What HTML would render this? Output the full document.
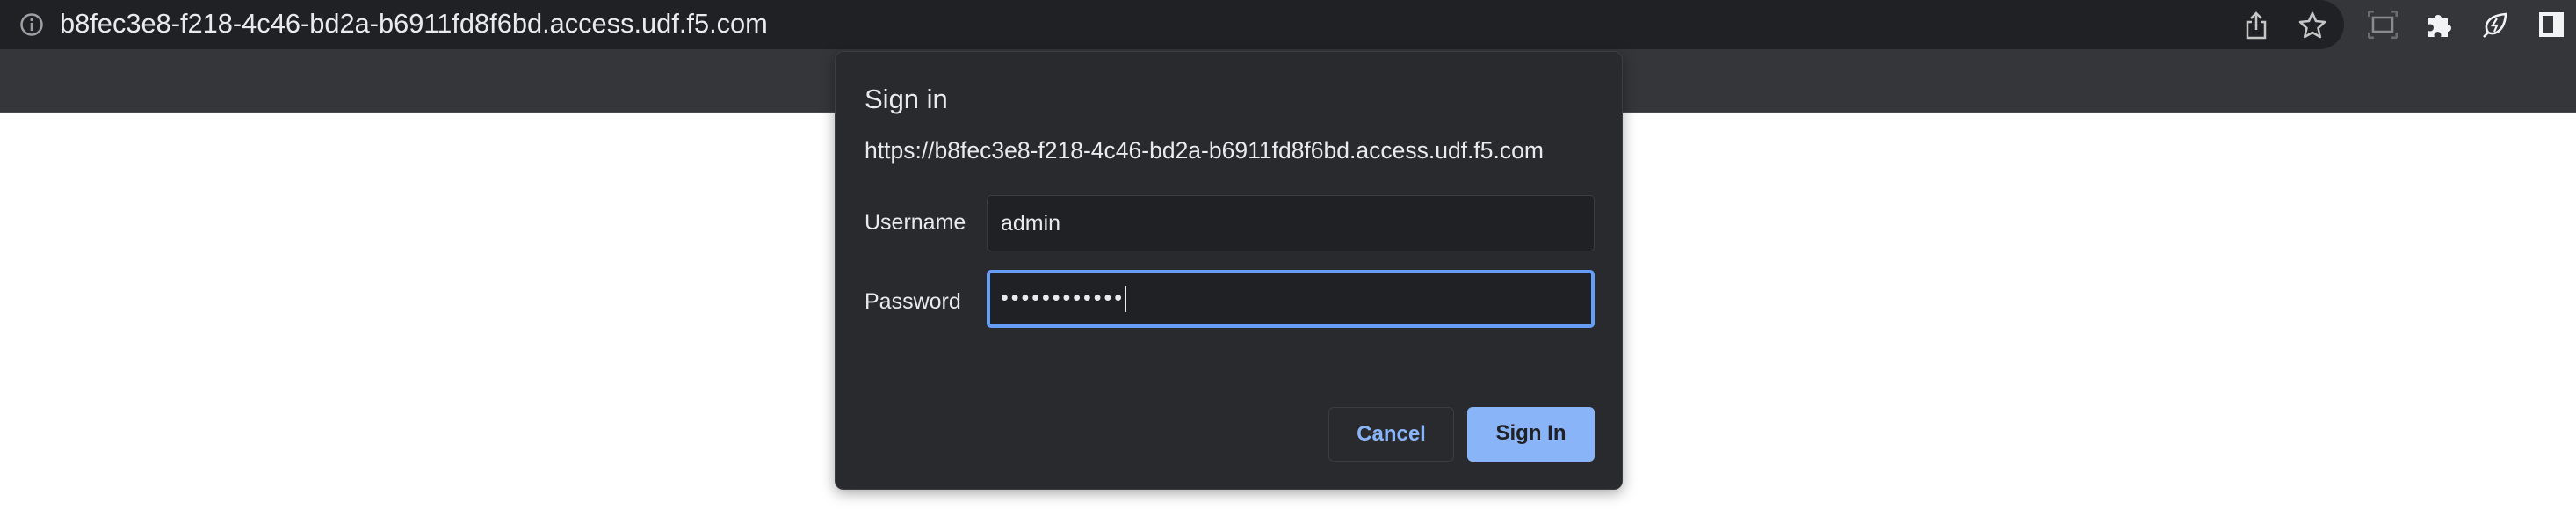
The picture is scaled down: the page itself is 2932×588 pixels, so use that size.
<!DOCTYPE html>
<html><head><meta charset="utf-8"><style>
*{margin:0;padding:0;box-sizing:border-box}
body{width:2932px;height:588px;background:#fff;position:relative;overflow:hidden;font-family:"Liberation Sans",sans-serif}
.bar{position:absolute;left:0;top:0;width:2932px;height:129px;background:#35363a;border-bottom:2px solid #4a4b4f}
.pill{position:absolute;left:0;top:0;width:2668px;height:56px;background:#202124;border-radius:0 28px 28px 0}
.url{position:absolute;left:68px;top:9px;font-size:30.8px;color:#e8eaed}
.ic{position:absolute}
.dlg{position:absolute;left:950px;top:58px;width:897px;height:499px;background:#292a2d;border:1px solid #3c3d40;border-radius:10px;box-shadow:0 4px 16px rgba(0,0,0,.35);color:#e8eaed}
.t{position:absolute;left:33px;top:36px;font-size:31px}
.u{position:absolute;left:33px;top:97px;font-size:26.5px}
.lb{position:absolute;left:33px;font-size:25px}
.f{position:absolute;left:172px;width:692px;background:#202124;border:1px solid #3c3d40;border-radius:5px;font-size:25px;padding-left:15px}
.btn{position:absolute;top:404px;height:62px;border-radius:6px;font-size:24px;font-weight:bold;text-align:center;line-height:60px}
</style></head><body>
<div class="bar">
<div class="pill"></div>
<svg class="ic" style="left:22px;top:14px" width="28" height="28" viewBox="0 0 28 28"><circle cx="14" cy="14" r="11.5" fill="none" stroke="#9aa0a6" stroke-width="2.5"/><rect x="12.7" y="12" width="2.6" height="9" fill="#9aa0a6"/><circle cx="14" cy="8.5" r="1.6" fill="#9aa0a6"/></svg>
<div class="url">b8fec3e8-f218-4c46-bd2a-b6911fd8f6bd.access.udf.f5.com</div>
<svg class="ic" style="left:2553px;top:12px" width="30" height="34" viewBox="0 0 30 34"><path d="M10 13H5v18h20V13h-5M15 22V3M9 9l6-6 6 6" fill="none" stroke="#c4c7c5" stroke-width="2.5"/></svg>
<svg class="ic" style="left:2615px;top:12px" width="34" height="32" viewBox="0 0 34 32"><path d="M17 3l4 9 10 1-7.5 7 2.3 10L17 25l-8.8 5 2.3-10L3 13l10-1z" fill="none" stroke="#c4c7c5" stroke-width="2.6" stroke-linejoin="round"/></svg>
<svg class="ic" style="left:2695px;top:12px" width="34" height="32" viewBox="0 0 34 32"><path d="M1 1h6M1 1v6M33 1h-6M33 1v6M1 31h6M1 31v-6M33 31h-6M33 31v-6" stroke="#6b6c6f" stroke-width="3"/><rect x="6" y="8" width="22" height="16" fill="none" stroke="#8a8b8e" stroke-width="2.5"/></svg>
<svg class="ic" style="left:2761px;top:13px" width="32" height="30" viewBox="0 0 32 30"><path d="M3 8h7a4 4 0 1 1 8 0h7v7a4 4 0 1 1 0 8v6h-8a4 4 0 1 0-7 0H3v-7a4 4 0 1 0 0-7z" fill="#f1f3f4"/></svg>
<svg class="ic" style="left:2824px;top:12px" width="32" height="32" viewBox="0 0 32 32"><path d="M3 30l5-5M8 25C3 18 6 6 28 4 27 22 16 29 8 25z" fill="none" stroke="#f1f3f4" stroke-width="2.6"/><path d="M18 9l-5 8h5l-3 7" fill="none" stroke="#f1f3f4" stroke-width="2.2"/></svg>
<div class="ic" style="left:2890px;top:14px;width:28px;height:28px;background:#f1f3f4"><div style="position:absolute;left:4px;top:4px;width:12px;height:20px;background:#35363a"></div></div>
</div>
<div class="dlg">
<div class="t">Sign in</div>
<div class="u">https://b8fec3e8-f218-4c46-bd2a-b6911fd8f6bd.access.udf.f5.com</div>
<div class="lb" style="top:180px">Username</div>
<div class="f" style="top:163px;height:64px;line-height:62px">admin</div>
<div class="lb" style="top:270px">Password</div>
<div class="f" style="top:248px;height:66px;border:4px solid #669df6;line-height:56px;padding-left:12px;letter-spacing:3px">••••••••••••<span style="display:inline-block;width:2px;height:30px;background:#e8eaed;vertical-align:middle"></span></div>
<div class="btn" style="left:561px;width:143px;border:1px solid #3c3d40;color:#8ab4f8">Cancel</div>
<div class="btn" style="left:719px;width:145px;background:#8ab4f8;color:#202124">Sign In</div>
</div>
</body></html>
